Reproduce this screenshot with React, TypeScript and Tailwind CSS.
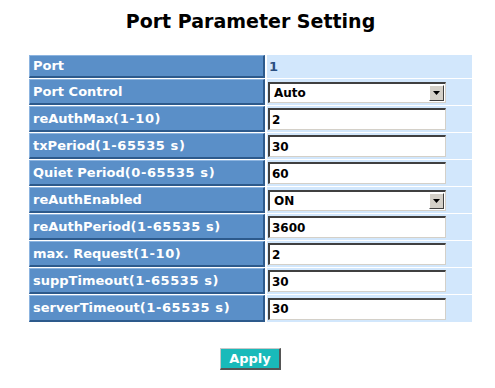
import React from "react";

const font = { fontFamily: '"DejaVu Sans", Verdana, sans-serif' };

type Row = { name: string; range?: string; kind: "text" | "select" | "input"; value: string; h: string };

const rows: Row[] = [
  { name: "Port", kind: "text", value: "1", h: "h-[23px]" },
  { name: "Port Control", kind: "select", value: "Auto", h: "h-[26px]" },
  { name: "reAuthMax", range: "(1-10)", kind: "input", value: "2", h: "h-[26px]" },
  { name: "txPeriod", range: "(1-65535 s)", kind: "input", value: "30", h: "h-[26px]" },
  { name: "Quiet Period", range: "(0-65535 s)", kind: "input", value: "60", h: "h-[26px]" },
  { name: "reAuthEnabled", kind: "select", value: "ON", h: "h-[26px]" },
  { name: "reAuthPeriod", range: "(1-65535 s)", kind: "input", value: "3600", h: "h-[26px]" },
  { name: "max. Request", range: "(1-10)", kind: "input", value: "2", h: "h-[26px]" },
  { name: "suppTimeout", range: "(1-65535 s)", kind: "input", value: "30", h: "h-[26px]" },
  { name: "serverTimeout", range: "(1-65535 s)", kind: "input", value: "30", h: "h-[27px]" },
];

function Field({ row }: { row: Row }) {
  if (row.kind === "text") {
    return <span className="pl-[2px] text-[13px] font-bold text-[#2a4f80]">{row.value}</span>;
  }
  if (row.kind === "select") {
    return (
      <div className="ml-[1px] flex h-[21px] w-[178px] items-stretch border-t-2 border-l-2 border-b border-r border-t-[#404040] border-l-[#404040] border-b-[#d4d0c8] border-r-[#d4d0c8] bg-white">
        <span className="flex flex-1 items-center pl-[4px] text-[12px] font-bold text-black">{row.value}</span>
        <span className="m-[1px] flex w-[15px] items-center justify-center border border-t-white border-l-white border-b-[#404040] border-r-[#404040] bg-[#d4d0c8]">
          <svg width="7" height="4" viewBox="0 0 7 4">
            <path d="M0 0h7L3.5 4z" fill="#000" />
          </svg>
        </span>
      </div>
    );
  }
  return (
    <div className="ml-[1px] flex h-[22px] w-[178px] items-center border-t-2 border-l-2 border-b border-r border-t-[#404040] border-l-[#404040] border-b-[#d4d0c8] border-r-[#d4d0c8] bg-white pl-[2px] text-[12px] font-bold text-black">
      {row.value}
    </div>
  );
}

export default function App() {
  return (
    <div className="min-h-[388px] w-[495px] bg-white" style={font}>
      <div className="flex flex-col items-center pl-[6px]">
        <h1 className="mt-[9px] text-[19px] font-bold leading-[24px] text-black">Port Parameter Setting</h1>
        <div className="mt-[22px] flex w-[443px] flex-col gap-[1px]">
          {rows.map((r) => (
            <div key={r.name} className={`flex gap-[2px] ${r.h}`}>
              <div className="flex w-[236px] items-center border-t border-l border-b-2 border-r-2 border-t-[#8cb4e0] border-l-[#8cb4e0] border-b-[#2d5a8c] border-r-[#2d5a8c] bg-[#5a8fc8] pl-[3px] text-[13px] font-bold text-white">
                {r.name}
                {r.range && <span className="tracking-[0.6px]">{r.range}</span>}
              </div>
              <div className="flex flex-1 items-center bg-[#d2e7fc]">
                <Field row={r} />
              </div>
            </div>
          ))}
        </div>
        <button className="mt-[26px] h-[22px] w-[61px] border-t border-l border-b-2 border-r-2 border-t-[#c8c8c8] border-l-[#c8c8c8] border-b-[#555555] border-r-[#555555] bg-[#19baba] text-[13px] font-bold leading-none text-white">
          Apply
        </button>
      </div>
    </div>
  );
}
